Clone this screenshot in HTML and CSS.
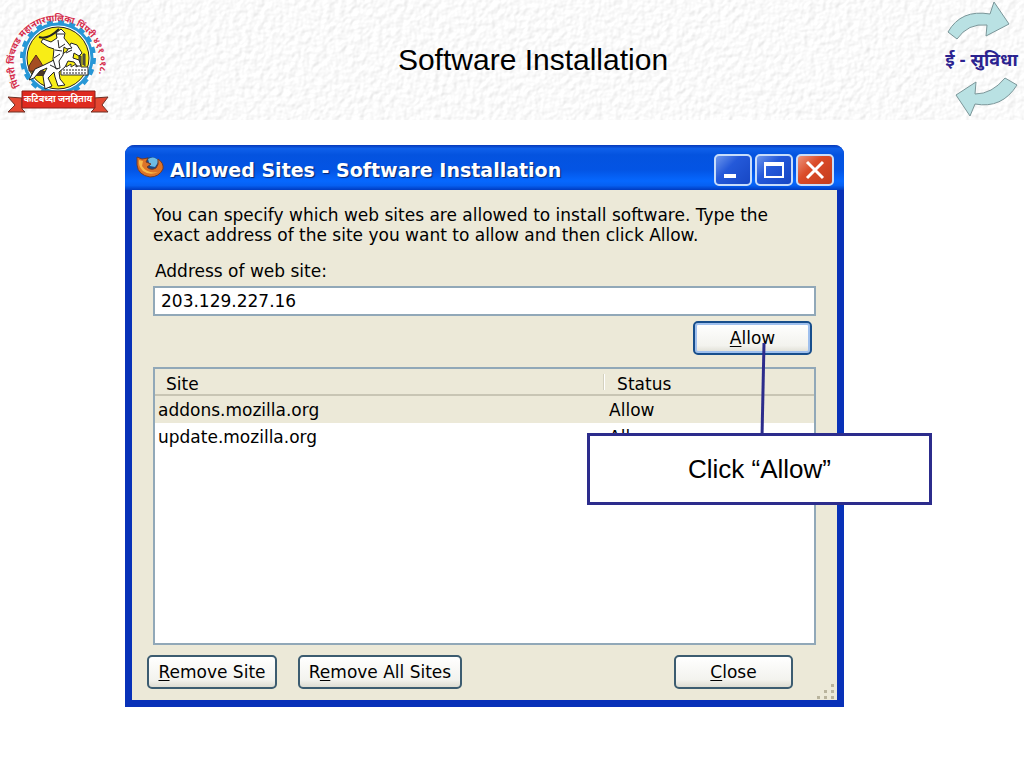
FILE: index.html
```html
<!DOCTYPE html>
<html lang="en">
  <head>
    <title>Software Installation</title>
    <meta charset="utf-8" />
    <meta name="viewport" content="width=device-width" />
    <link rel="stylesheet" href="styles.css">
  </head>
  <body>
    <header class="banner">
      <svg class="paper" aria-hidden="true">
        <filter id="grain" x="0" y="0" width="100%" height="100%" color-interpolation-filters="sRGB">
          <feTurbulence type="fractalNoise" baseFrequency="0.16" numOctaves="2" seed="4" />
          <feDiffuseLighting lighting-color="#fff" surfaceScale="0.7" diffuseConstant="1.1">
            <feDistantLight azimuth="225" elevation="62" />
          </feDiffuseLighting>
        </filter>
        <rect width="100%" height="100%" filter="url(#grain)" />
      </svg>

      <svg class="logo" viewBox="0 0 118 120" role="img" aria-label="Pimpri Chinchwad">
        <path id="arc" d="M20 86A43 43 0 1 1 97 80" fill="none" />
        <circle cx="58" cy="58" r="36" fill="none" stroke="#2797d6" stroke-width="4" stroke-dasharray="6 5.300" />
        <circle cx="58" cy="58" r="34" fill="#fff" stroke="#2797d6" stroke-width="3" />
        <circle cx="58" cy="58" r="31" fill="#f8ed16" stroke="#222" stroke-width="1" />
        <path d="M29 71V66L32 61L36 55L40 61L43 66V71Z" fill="#a54e22" stroke="#5a2c18" />
        <path d="M31 71H51V76H33Z" fill="#4b3825" />
        <path d="M61 75V67L66 64V67L71 64V67L76 64V67L81 64V67H88V75Z" fill="#fff" stroke="#333" />
        <path d="M79 64V56H81V64M83 65V54H85V66" fill="#665" stroke="#333" />
        <path d="M63 70H86M63 73H86" stroke="#222" stroke-dasharray="2 1" />
        <path d="M39 37Q48 40 59 29" fill="none" stroke="#222" stroke-width="2" />
        <!-- horse -->
        <path d="M52 61L61 55L67 51L71 43L77 45L82 53L79 56L74 53L73 58L79 60L81 66L77 66L74 62L68 61L65 67L59 72L60 79L65 85L58 86L55 77L54 72L48 78L52 86L45 89L43 76L47 68L40 71L34 78L29 80L35 69L44 65Z" fill="#fff" stroke="#222" stroke-width="1" />
        <!-- rider -->
        <path d="M57 38L56 33L61 29L65 33L64 38L68 43L72 48L67 49L64 47L63 55L59 61L60 68L56 69L53 59L54 49L48 47L41 42L43 39L51 42Z" fill="#fff" stroke="#222" stroke-width="1" />
        <path d="M56 34L64 34M58 40L59 48L65 44M55 50L62 51M54 58L60 54M66 53L72 50M50 65L58 69" fill="none" stroke="#222" stroke-width="1" />
        <path d="M8 97L22 98V109L25 112H8L15 105ZM108 97L94 98V109L91 112H108L102 105Z" fill="#e44832" stroke="#6c3025" stroke-width="1" />
        <path d="M22 91H95V108H22Z" fill="#df2b20" stroke="#8b2019" stroke-width="1" />
        <text class="logo-ring"><textPath href="#arc">पिंपरी चिंचवड महानगरपालिका पिंपरी ४११ ०१८.</textPath></text>
        <text class="logo-motto" x="58" y="102">कटिबध्दा जनहिताय</text>
      </svg>

      <h1>Software Installation</h1>

      <div class="suvidha">
        <svg viewBox="0 0 80 46" aria-hidden="true">
          <path d="M4 32Q17 9 46 14L50 2L65 24L42 36L43 25Q24 23 13 39Z" />
        </svg>
        <span>ई - सुविधा</span>
        <svg viewBox="0 0 80 46" aria-hidden="true">
          <path d="M61 4L73 11Q58 35 31 30L26 42L12 21L32 8L31 20Q48 20 61 4Z" />
        </svg>
      </div>
    </header>

    <main>
      <section class="window">
        <div class="titlebar">
          <svg class="fox" viewBox="0 0 30 24" aria-hidden="true">
            <ellipse cx="16" cy="11" rx="11" ry="9" fill="#174c8d" />
            <path d="M13 4Q19 0 24 6L20 12L15 11Z" fill="#6dbbe4" />
            <path d="M2 2L7 4L13 3L11 7L16 9L12 12Q16 16 21 13Q24 10 23 4Q29 8 28 14Q24 22 15 22Q3 20 2 10Z" fill="#dc7428" stroke="#713a2a" stroke-width="1" />
            <path d="M4 5L8 6L7 11Q12 19 23 17Q15 21 8 16Q3 11 4 5Z" fill="#f7ba4b" />
          </svg>
          <h2>Allowed Sites - Software Installation</h2>
          <button class="control" aria-label="Minimize"><svg viewBox="0 0 30 26"><path d="M6 19H18" stroke-width="4" /></svg></button>
          <button class="control" aria-label="Maximize"><svg viewBox="0 0 30 26"><path d="M6 6H24V20H6ZM6 8H24" /></svg></button>
          <button class="control close" aria-label="Close window"><svg viewBox="0 0 30 26"><path d="M7 5L23 21M23 5L7 21" stroke-width="3" /></svg></button>
        </div>

        <div class="content">
          <p>You can specify which web sites are allowed to install software. Type the<br>exact address of the site you want to allow and then click Allow.</p>
          <label for="address">Address of web site:</label>
          <input id="address" type="text" value="203.129.227.16" />
          <div class="allow-row">
            <button class="button default"><u>A</u>llow</button>
          </div>
          <div class="sites">
            <table>
              <thead>
                <tr><th>Site</th><th>Status</th></tr>
              </thead>
              <tbody>
                <tr class="selected"><td>addons.mozilla.org</td><td>Allow</td></tr>
                <tr><td>update.mozilla.org</td><td>Allow</td></tr>
              </tbody>
            </table>
          </div>
          <div class="actions">
            <button class="button remove"><u>R</u>emove Site</button>
            <button class="button remove-all">R<u>e</u>move All Sites</button>
            <button class="button close-dialog"><u>C</u>lose</button>
          </div>
        </div>

        <svg class="grip" viewBox="0 0 20 16" aria-hidden="true">
          <path d="M15 1h3v3h-3zM8 7h3v3h-3zM15 7h3v3h-3zM1 13h3v3h-3zM8 13h3v3h-3zM15 13h3v3h-3z" />
        </svg>
        <svg class="pointer" viewBox="0 0 8 96" aria-hidden="true"><path d="M5 1L3 95" /></svg>
        <div class="callout">Click “Allow”</div>
      </section>
    </main>
  </body>
</html>
```
FILE: styles.css
```css
* {
  box-sizing: border-box;
}

body {
  margin: 0;
  min-height: 100vh;
  background: #fff;
  color: #000;
  font-family: "Liberation Sans", sans-serif;
}

.banner {
  position: relative;
  display: flex;
  align-items: center;
  height: 120px;
}

.paper {
  position: absolute;
  z-index: -1;
  width: 100%;
  height: 100%;
  opacity: 0.5;
}

.logo {
  width: 118px;
  height: 120px;
  overflow: visible;
}

.logo-ring {
  fill: #d52b4a;
  font: bold 9px "Noto Sans Devanagari", "Noto Sans", sans-serif;
}

.logo-motto {
  fill: #fff;
  font: bold 9px "Noto Sans Devanagari", "Noto Sans", sans-serif;
  text-anchor: middle;
}

h1 {
  flex: 1;
  margin: 0;
  padding-left: 4px;
  text-align: center;
  font-size: 30px;
  font-weight: normal;
}

.suvidha {
  display: flex;
  flex-direction: column;
  align-items: center;
  width: 80px;
  color: #2b2390;
  font: bold 18px/28px "Noto Sans Devanagari", "Noto Sans", sans-serif;
  white-space: nowrap;
}

.suvidha span {
  padding: 3px 5px 0 0;
  line-height: 25px;
}

.suvidha svg {
  width: 80px;
  height: 46px;
  fill: #b9e1e3;
  stroke: #7b9699;
}

main {
  padding: 25px 180px 60px 125px;
}

.window {
  position: relative;
  border: solid #0831b8;
  border-width: 0 7px 7px;
  border-radius: 9px 9px 0 0;
  background: #ece9d8;
  font: 17px/20px "DejaVu Sans", sans-serif;
}

.titlebar {
  display: flex;
  align-items: center;
  gap: 3px;
  height: 45px;
  margin: 0 -7px;
  padding: 4px 10px 0;
  border-radius: 9px 9px 0 0;
  background: linear-gradient(#0739b8, #0f60ea 8%, #0453df 22%, #0354e4 55%, #0668ff 80%, #0660f2 90%, #003bc0);
}

.fox {
  width: 30px;
  height: 24px;
  margin-bottom: 6px;
}

h2 {
  flex: 1;
  margin: 0;
  padding-left: 2px;
  color: #fff;
  font: bold 19px/24px "DejaVu Sans", sans-serif;
  white-space: nowrap;
  text-shadow: 1px 1px 1px #06256e;
}

.control {
  width: 38px;
  height: 32px;
  padding: 1px 2px;
  border: 2px solid #c8ddfa;
  border-radius: 5px;
  background: linear-gradient(135deg, #6d96ec, #2459d9 40%, #1747c4);
}

.control svg {
  display: block;
  width: 30px;
  height: 26px;
  fill: none;
  stroke: #fff;
  stroke-width: 2;
}

.close {
  background: linear-gradient(135deg, #ed937c, #da4b28 40%, #c53c1d);
}

.content {
  padding: 15px 21px 11px;
}

p {
  margin: 0 0 16px;
  white-space: nowrap;
}

label {
  display: block;
  margin: 0 2px 5px;
}

input {
  display: block;
  width: 100%;
  height: 30px;
  padding: 0 6px;
  border: 2px solid #91a8b8;
  background: #fff;
  font: inherit;
}

.allow-row {
  display: flex;
  justify-content: flex-end;
  padding: 5px 4px 12px 0;
}

.button {
  height: 34px;
  padding: 0 6px;
  border: 2px solid #3c5c70;
  border-radius: 5px;
  background: linear-gradient(#fff, #f3f3ee 75%, #dddcd2);
  color: #000;
  font: inherit;
  white-space: nowrap;
}

.button u {
  text-underline-offset: 2px;
}

.default,
.close-dialog {
  width: 119px;
}

.default {
  border-color: #174e8c;
  box-shadow: inset 0 0 0 2px #9fc0ee;
}

.sites {
  height: 278px;
  border: 2px solid #91a8b8;
  background: #fff;
}

table {
  width: 100%;
  border-collapse: separate;
  border-spacing: 0;
  table-layout: fixed;
}

th,
td {
  height: 27px;
  padding: 0 3px;
  text-align: left;
  font-weight: normal;
}

th {
  padding: 4px 11px 0;
  border-bottom: 2px solid #c8c5b4;
  background: linear-gradient(90deg, #d4d1bf 1px, #fff 1px, #fff 2px, transparent 2px) 0 5px / 100% 16px no-repeat #ece9d8;
}

th:first-child {
  width: 68%;
  background: #ece9d8;
}

th:last-child {
  padding-left: 14px;
}

td:last-child {
  padding-left: 6px;
}

.selected {
  background: #ece9d8;
}

.actions {
  display: flex;
  gap: 21px;
  margin: 10px 23px 0 -6px;
}

.remove {
  width: 130px;
}

.remove-all {
  width: 164px;
}

.close-dialog {
  margin-left: auto;
}

.grip {
  position: absolute;
  right: 1px;
  bottom: 1px;
  width: 20px;
  height: 16px;
  fill: #b9b49d;
}

.pointer {
  position: absolute;
  top: 197px;
  right: 70px;
  width: 8px;
  height: 96px;
  fill: none;
  stroke: #2c2c8c;
  stroke-width: 3;
}

.callout {
  position: absolute;
  top: 288px;
  right: -95px;
  width: 345px;
  padding: 20px;
  border: 3px solid #2c2c8c;
  background: #fff;
  text-align: center;
  font: 26px/26px "Liberation Sans", sans-serif;
}
```
